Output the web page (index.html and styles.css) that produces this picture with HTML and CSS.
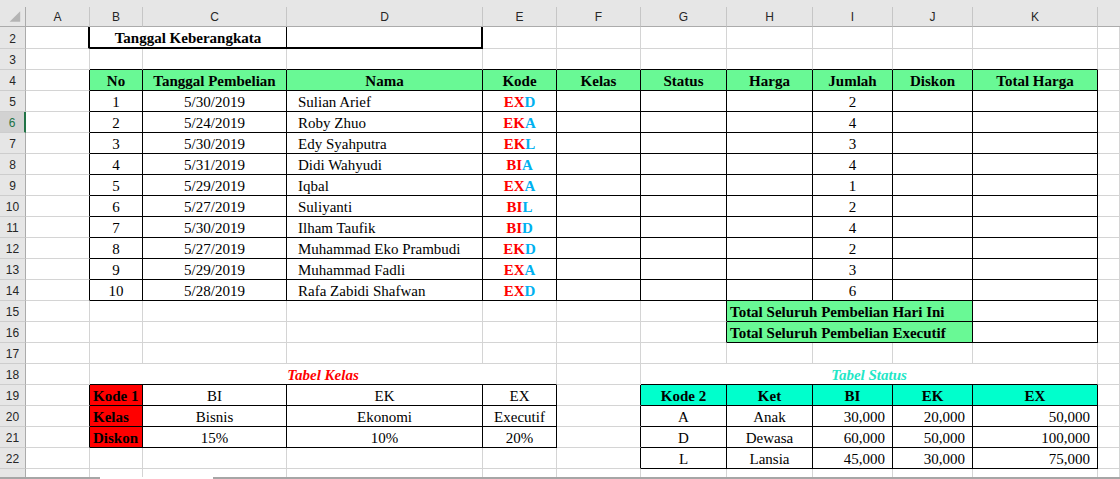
FILE: index.html
```html
<!DOCTYPE html>
<html>
<head>
<meta charset="utf-8">
<link rel="stylesheet" href="styles.css">
</head>
<body>
<div class="topband"></div>
<div class="sheet">
  <!-- column header -->
  <div class="c ch corner"><svg width="26" height="20" viewBox="0 0 26 20"><polygon points="21,4 21,15 10,15" fill="#b4b4b4"/></svg></div>
  <div class="c ch">A</div><div class="c ch">B</div><div class="c ch">C</div><div class="c ch">D</div><div class="c ch">E</div><div class="c ch">F</div><div class="c ch">G</div><div class="c ch">H</div><div class="c ch">I</div><div class="c ch">J</div><div class="c ch">K</div><div class="c ch last"></div>

  <!-- row 2 -->
  <div class="c rh">2</div>
  <div class="c thickR"></div>
  <div class="c s2 bold ctr R thickB">Tanggal Keberangkata</div>
  <div class="c thickR thickB"></div>
  <div class="c"></div><div class="c"></div><div class="c"></div><div class="c"></div><div class="c"></div><div class="c"></div><div class="c"></div><div class="c"></div>

  <!-- row 3 -->
  <div class="c rh">3</div>
  <div class="c"></div>
  <div class="c B"></div><div class="c B"></div><div class="c B"></div><div class="c B"></div><div class="c B"></div><div class="c B"></div><div class="c B"></div><div class="c B"></div><div class="c B"></div><div class="c B"></div>
  <div class="c"></div>

  <!-- row 4 header -->
  <div class="c rh">4</div>
  <div class="c R"></div>
  <div class="c R B green bold ctr">No</div>
  <div class="c R B green bold ctr">Tanggal Pembelian</div>
  <div class="c R B green bold ctr">Nama</div>
  <div class="c R B green bold ctr">Kode</div>
  <div class="c R B green bold ctr">Kelas</div>
  <div class="c R B green bold ctr">Status</div>
  <div class="c R B green bold ctr">Harga</div>
  <div class="c R B green bold ctr">Jumlah</div>
  <div class="c R B green bold ctr">Diskon</div>
  <div class="c R B green bold ctr">Total Harga</div>
  <div class="c"></div>

  <!-- row 5 -->
  <div class="c rh">5</div>
  <div class="c R"></div>
  <div class="c R B ctr">1</div><div class="c R B ctr">5/30/2019</div><div class="c R B nama">Sulian Arief</div>
  <div class="c R B ctr bold"><span class="kr">EX</span><span class="kb">D</span></div>
  <div class="c R B"></div><div class="c R B"></div><div class="c R B"></div><div class="c R B ctr">2</div><div class="c R B"></div><div class="c R B"></div>
  <div class="c"></div>

  <!-- row 6 -->
  <div class="c rh sel">6</div>
  <div class="c R"></div>
  <div class="c R B ctr">2</div><div class="c R B ctr">5/24/2019</div><div class="c R B nama">Roby Zhuo</div>
  <div class="c R B ctr bold"><span class="kr">EK</span><span class="kb">A</span></div>
  <div class="c R B"></div><div class="c R B"></div><div class="c R B"></div><div class="c R B ctr">4</div><div class="c R B"></div><div class="c R B"></div>
  <div class="c"></div>

  <!-- row 7 -->
  <div class="c rh">7</div>
  <div class="c R"></div>
  <div class="c R B ctr">3</div><div class="c R B ctr">5/30/2019</div><div class="c R B nama">Edy Syahputra</div>
  <div class="c R B ctr bold"><span class="kr">EK</span><span class="kb">L</span></div>
  <div class="c R B"></div><div class="c R B"></div><div class="c R B"></div><div class="c R B ctr">3</div><div class="c R B"></div><div class="c R B"></div>
  <div class="c"></div>

  <!-- row 8 -->
  <div class="c rh">8</div>
  <div class="c R"></div>
  <div class="c R B ctr">4</div><div class="c R B ctr">5/31/2019</div><div class="c R B nama">Didi Wahyudi</div>
  <div class="c R B ctr bold"><span class="kr">BI</span><span class="kb">A</span></div>
  <div class="c R B"></div><div class="c R B"></div><div class="c R B"></div><div class="c R B ctr">4</div><div class="c R B"></div><div class="c R B"></div>
  <div class="c"></div>

  <!-- row 9 -->
  <div class="c rh">9</div>
  <div class="c R"></div>
  <div class="c R B ctr">5</div><div class="c R B ctr">5/29/2019</div><div class="c R B nama">Iqbal</div>
  <div class="c R B ctr bold"><span class="kr">EX</span><span class="kb">A</span></div>
  <div class="c R B"></div><div class="c R B"></div><div class="c R B"></div><div class="c R B ctr">1</div><div class="c R B"></div><div class="c R B"></div>
  <div class="c"></div>

  <!-- row 10 -->
  <div class="c rh">10</div>
  <div class="c R"></div>
  <div class="c R B ctr">6</div><div class="c R B ctr">5/27/2019</div><div class="c R B nama">Suliyanti</div>
  <div class="c R B ctr bold"><span class="kr">BI</span><span class="kb">L</span></div>
  <div class="c R B"></div><div class="c R B"></div><div class="c R B"></div><div class="c R B ctr">2</div><div class="c R B"></div><div class="c R B"></div>
  <div class="c"></div>

  <!-- row 11 -->
  <div class="c rh">11</div>
  <div class="c R"></div>
  <div class="c R B ctr">7</div><div class="c R B ctr">5/30/2019</div><div class="c R B nama">Ilham Taufik</div>
  <div class="c R B ctr bold"><span class="kr">BI</span><span class="kb">D</span></div>
  <div class="c R B"></div><div class="c R B"></div><div class="c R B"></div><div class="c R B ctr">4</div><div class="c R B"></div><div class="c R B"></div>
  <div class="c"></div>

  <!-- row 12 -->
  <div class="c rh">12</div>
  <div class="c R"></div>
  <div class="c R B ctr">8</div><div class="c R B ctr">5/27/2019</div><div class="c R B nama">Muhammad Eko Prambudi</div>
  <div class="c R B ctr bold"><span class="kr">EK</span><span class="kb">D</span></div>
  <div class="c R B"></div><div class="c R B"></div><div class="c R B"></div><div class="c R B ctr">2</div><div class="c R B"></div><div class="c R B"></div>
  <div class="c"></div>

  <!-- row 13 -->
  <div class="c rh">13</div>
  <div class="c R"></div>
  <div class="c R B ctr">9</div><div class="c R B ctr">5/29/2019</div><div class="c R B nama">Muhammad Fadli</div>
  <div class="c R B ctr bold"><span class="kr">EX</span><span class="kb">A</span></div>
  <div class="c R B"></div><div class="c R B"></div><div class="c R B"></div><div class="c R B ctr">3</div><div class="c R B"></div><div class="c R B"></div>
  <div class="c"></div>

  <!-- row 14 -->
  <div class="c rh">14</div>
  <div class="c R"></div>
  <div class="c R B ctr">10</div><div class="c R B ctr">5/28/2019</div><div class="c R B nama">Rafa Zabidi Shafwan</div>
  <div class="c R B ctr bold"><span class="kr">EX</span><span class="kb">D</span></div>
  <div class="c R B"></div><div class="c R B"></div><div class="c R B"></div><div class="c R B ctr">6</div><div class="c R B"></div><div class="c R B"></div>
  <div class="c"></div>

  <!-- row 15 -->
  <div class="c rh">15</div>
  <div class="c"></div><div class="c"></div><div class="c"></div><div class="c"></div><div class="c"></div><div class="c"></div>
  <div class="c R"></div>
  <div class="c s3 R B green bold">Total Seluruh Pembelian Hari Ini</div>
  <div class="c R B"></div>
  <div class="c"></div>

  <!-- row 16 -->
  <div class="c rh">16</div>
  <div class="c"></div><div class="c"></div><div class="c"></div><div class="c"></div><div class="c"></div><div class="c"></div>
  <div class="c R"></div>
  <div class="c s3 R B green bold">Total Seluruh Pembelian Executif</div>
  <div class="c R B"></div>
  <div class="c"></div>

  <!-- row 17 -->
  <div class="c rh">17</div>
  <div class="c"></div><div class="c"></div><div class="c"></div><div class="c"></div><div class="c"></div><div class="c"></div><div class="c"></div><div class="c"></div><div class="c"></div><div class="c"></div><div class="c"></div><div class="c"></div>

  <!-- row 18 -->
  <div class="c rh">18</div>
  <div class="c"></div>
  <div class="c s4 B ctr title tkelas">Tabel Kelas</div>
  <div class="c"></div>
  <div class="c s5 B ctr title tstatus">Tabel Status</div>
  <div class="c"></div>

  <!-- row 19 -->
  <div class="c rh">19</div>
  <div class="c R"></div>
  <div class="c R B redbg bold">Kode 1</div>
  <div class="c R B ctr">BI</div><div class="c R B ctr">EK</div><div class="c R B ctr">EX</div>
  <div class="c R"></div>
  <div class="c R B aqua bold ctr">Kode 2</div>
  <div class="c R B aqua bold ctr">Ket</div>
  <div class="c R B aqua bold ctr">BI</div>
  <div class="c R B aqua bold ctr">EK</div>
  <div class="c R B aqua bold ctr">EX</div>
  <div class="c"></div>

  <!-- row 20 -->
  <div class="c rh">20</div>
  <div class="c R"></div>
  <div class="c R B redbg bold">Kelas</div>
  <div class="c R B ctr">Bisnis</div><div class="c R B ctr">Ekonomi</div><div class="c R B ctr">Executif</div>
  <div class="c R"></div>
  <div class="c R B ctr">A</div><div class="c R B ctr">Anak</div>
  <div class="c R B rt">30,000</div><div class="c R B rt">20,000</div><div class="c R B rt">50,000</div>
  <div class="c"></div>

  <!-- row 21 -->
  <div class="c rh">21</div>
  <div class="c R"></div>
  <div class="c R B redbg bold">Diskon</div>
  <div class="c R B ctr">15%</div><div class="c R B ctr">10%</div><div class="c R B ctr">20%</div>
  <div class="c R"></div>
  <div class="c R B ctr">D</div><div class="c R B ctr">Dewasa</div>
  <div class="c R B rt">60,000</div><div class="c R B rt">50,000</div><div class="c R B rt">100,000</div>
  <div class="c"></div>

  <!-- row 22 -->
  <div class="c rh">22</div>
  <div class="c"></div><div class="c"></div><div class="c"></div><div class="c"></div><div class="c"></div>
  <div class="c R"></div>
  <div class="c R B ctr">L</div><div class="c R B ctr">Lansia</div>
  <div class="c R B rt">45,000</div><div class="c R B rt">30,000</div><div class="c R B rt">75,000</div>
  <div class="c"></div>

  <!-- row 23 (partial) -->
  <div class="c rh nb"></div>
  <div class="c nb"></div><div class="c nb"></div><div class="c nb"></div><div class="c nb"></div><div class="c nb"></div><div class="c nb"></div><div class="c nb"></div><div class="c nb"></div><div class="c nb"></div><div class="c nb"></div><div class="c nb"></div><div class="c nb"></div>
</div>
<div class="footer">
  <div class="seg seg1"></div>
  <div class="seg gap"></div>
  <div class="seg seg2"></div>
</div>
</body>
</html>
```

FILE: styles.css
```css
html, body {
  margin: 0;
  padding: 0;
}
body {
  width: 1120px;
  height: 479px;
  overflow: hidden;
  background: #ffffff;
  font-family: "Liberation Serif", "Times New Roman", serif;
}
.topband {
  height: 7px;
  background: #e6e6e6;
}
.sheet {
  display: grid;
  grid-template-columns: 26px 64px 53px 144px 196px 74px 84px 86px 86px 80px 80px 125px 1fr;
  grid-template-rows: 20px 22px repeat(20, 21px) 8px;
}
.c {
  box-sizing: border-box;
  border-right: 1px solid #d4d4d4;
  border-bottom: 1px solid #d4d4d4;
  display: flex;
  align-items: flex-end;
  padding: 0 3px;
  font-size: 15px;
  line-height: 17px;
  white-space: nowrap;
  overflow: hidden;
  color: #000;
  min-width: 0;
}
.ch {
  background: #e6e6e6;
  border-right-color: #c6c6c6;
  border-bottom-color: #ababab;
  justify-content: center;
  align-items: center;
  font-family: "Liberation Sans", Arial, sans-serif;
  font-size: 12px;
  line-height: 14px;
  color: #262626;
  padding: 0;
}
.ch.last {
  border-right: none;
}
.corner {
  border-right-color: #ababab;
  align-items: flex-start;
  justify-content: flex-start;
}
.corner svg {
  display: block;
}
.rh {
  background: #e6e6e6;
  border-right-color: #ababab;
  border-bottom-color: #cdcdcd;
  justify-content: center;
  font-family: "Liberation Sans", Arial, sans-serif;
  font-size: 12px;
  line-height: 16px;
  color: #262626;
  padding: 0 0 1px 0;
}
.rh.sel {
  background: #d2d2d2;
  color: #217346;
  border-right: 2px solid #217346;
}
.nb {
  border-bottom: none;
}
.R { border-right-color: #000; }
.B { border-bottom-color: #000; }
.thickR { border-right: 2px solid #000; }
.thickB { border-bottom: 2px solid #000; }
.s2 { grid-column: span 2; }
.s3 { grid-column: span 3; }
.s4 { grid-column: span 4; }
.s5 { grid-column: span 5; }
.ctr { justify-content: center; }
.rt { justify-content: flex-end; padding-right: 7px; }
.nama { padding-left: 11px; }
.bold { font-weight: bold; }
.green { background: #69f995; }
.aqua { background: #00ffcc; }
.redbg { background: #ff0000; }
.kr { color: #ff0000; }
.kb { color: #00b0f0; }
.title {
  font-weight: bold;
  font-style: italic;
}
.tkelas { color: #ff0000; }
.tstatus { color: #22e6c6; }
.footer {
  display: flex;
  height: 2px;
}
.seg1 {
  width: 100px;
  background: #a6a6a6;
}
.gap {
  width: 113px;
  background: #ffffff;
}
.seg2 {
  flex: 1;
  background: #a6a6a6;
}
```
